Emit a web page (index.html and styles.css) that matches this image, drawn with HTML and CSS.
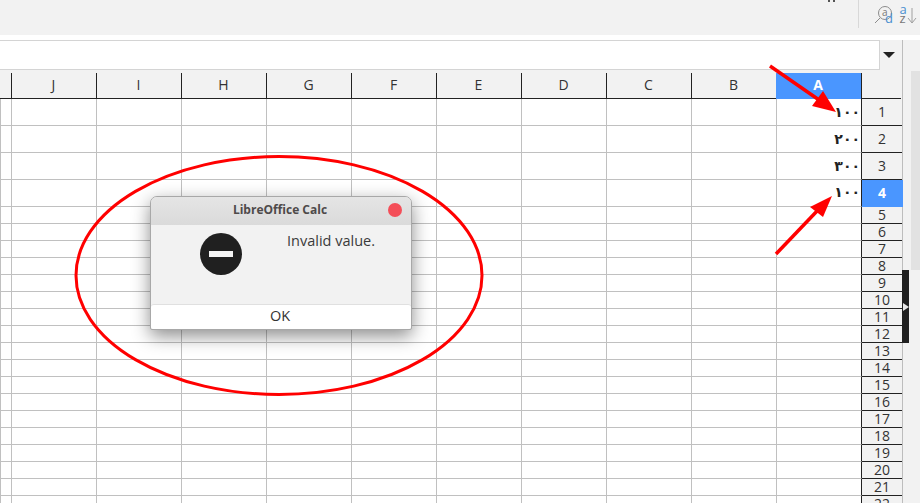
FILE: index.html
```html
<!DOCTYPE html>
<html lang="en">
<head>
<meta charset="utf-8">
<title>LibreOffice Calc</title>
<link rel="stylesheet" href="styles.css">
</head>
<body>
<div class="app">
  <div class="toolbar">
    <div class="clip-marks"><i></i><i></i></div>
    <div class="sep"></div>
    <svg class="tool-icon" width="20" height="28" viewBox="0 0 20 28">
      <circle cx="11" cy="13" r="6.5" fill="none" stroke="#8c8c8c"/>
      <path d="M6 18 L1 23" stroke="#8c8c8c" fill="none"/>
      <text class="icon-letter grey" x="8" y="16">a</text>
      <text class="icon-letter blue big" x="11" y="23">d</text>
    </svg>
    <svg class="tool-icon sort" width="18" height="28" viewBox="0 0 18 28">
      <text class="icon-letter blue big" x="0.5" y="14">a</text>
      <text class="icon-letter grey big" x="0.5" y="23">z</text>
      <path d="M13 8 V23 M9 18 L13 23 L17 18" fill="none" stroke="#a0a0a0"/>
    </svg>
  </div>
  <div class="formula-bar">
    <div class="formula-input"></div>
    <div class="formula-drop"></div>
  </div>
  <div class="sheet">
    <div class="pane">
      <div class="col-heads">
        <div class="corner"></div>
        <div class="col-head">J</div>
        <div class="col-head">I</div>
        <div class="col-head">H</div>
        <div class="col-head">G</div>
        <div class="col-head">F</div>
        <div class="col-head">E</div>
        <div class="col-head">D</div>
        <div class="col-head">C</div>
        <div class="col-head">B</div>
        <div class="col-head active">A</div>
        <div class="col-rest"></div>
      </div>
      <div class="row tall"><div class="cells"><span class="num">١٠٠</span></div><div class="row-head">1</div></div>
      <div class="row tall"><div class="cells"><span class="num">٢٠٠</span></div><div class="row-head">2</div></div>
      <div class="row tall"><div class="cells"><span class="num">٣٠٠</span></div><div class="row-head">3</div></div>
      <div class="row tall"><div class="cells"><span class="num last">١٠٠</span></div><div class="row-head active">4</div></div>
      <div class="row"><div class="cells"></div><div class="row-head">5</div></div>
      <div class="row"><div class="cells"></div><div class="row-head">6</div></div>
      <div class="row"><div class="cells"></div><div class="row-head">7</div></div>
      <div class="row"><div class="cells"></div><div class="row-head">8</div></div>
      <div class="row"><div class="cells"></div><div class="row-head">9</div></div>
      <div class="row"><div class="cells"></div><div class="row-head">10</div></div>
      <div class="row"><div class="cells"></div><div class="row-head">11</div></div>
      <div class="row"><div class="cells"></div><div class="row-head">12</div></div>
      <div class="row"><div class="cells"></div><div class="row-head">13</div></div>
      <div class="row"><div class="cells"></div><div class="row-head">14</div></div>
      <div class="row"><div class="cells"></div><div class="row-head">15</div></div>
      <div class="row"><div class="cells"></div><div class="row-head">16</div></div>
      <div class="row"><div class="cells"></div><div class="row-head">17</div></div>
      <div class="row"><div class="cells"></div><div class="row-head">18</div></div>
      <div class="row"><div class="cells"></div><div class="row-head">19</div></div>
      <div class="row"><div class="cells"></div><div class="row-head">20</div></div>
      <div class="row"><div class="cells"></div><div class="row-head">21</div></div>
      <div class="row"><div class="cells"></div><div class="row-head">22</div></div>
    </div>
    <div class="scroll">
      <div class="scroll-thumb"></div>
    </div>
    <div class="sidebar-handle"><svg width="6" height="8" viewBox="0 0 6 8"><path d="M0 0 L6 4 L0 8 Z" fill="#e8e8e8"/></svg></div>
  </div>
</div>

<div class="dialog">
  <div class="dialog-title">LibreOffice Calc<span class="dialog-close"></span></div>
  <div class="dialog-body">
    <svg class="stop-icon" width="42" height="42" viewBox="0 0 42 42">
      <circle cx="21" cy="21" r="21" fill="#202020"/>
      <rect x="9" y="18" width="24" height="6" fill="#f4f4f4"/>
    </svg>
    <div class="dialog-msg">Invalid value.</div>
  </div>
  <button class="dialog-ok">OK</button>
</div>

<svg class="marks" width="920" height="503" viewBox="0 0 920 503">
  <ellipse cx="279" cy="275.5" rx="203" ry="119" fill="none" stroke="#ff0000" stroke-width="3"/>
  <path d="M770 66 L822 102" stroke="#ff0000" stroke-width="3.5" fill="none"/>
  <path d="M836 112 L812 106 L823 91 Z" fill="#ff0000"/>
  <path d="M776 254 L818 210" stroke="#ff0000" stroke-width="3.5" fill="none"/>
  <path d="M832 196 L823 217 L810 207 Z" fill="#ff0000"/>
</svg>
</body>
</html>
```
FILE: styles.css
```css
* { box-sizing: border-box; }
html, body { margin: 0; padding: 0; width: 920px; height: 503px; overflow: hidden; background: #fff; }
body { font-family: "Open Sans", "Noto Sans", sans-serif; color: #333; position: relative; }

.app { display: flex; flex-direction: column; height: 503px; overflow: hidden; }

.toolbar { height: 35px; background: #f2f2f2; display: flex; align-items: flex-start; justify-content: flex-end; margin-bottom: 5px; padding-right: 3px; flex: none; }
.clip-marks { display: flex; gap: 3px; margin-right: 23px; }
.clip-marks i { display: block; width: 2px; height: 2px; background: #555; }
.sep { width: 1px; height: 28px; background: #d8d8d8; margin-right: 15px; }
.tool-icon { display: block; margin-right: 5px; }
.tool-icon.sort { margin-right: 0; }
.icon-letter { font-family: "Open Sans", sans-serif; font-size: 10px; }
.icon-letter.big { font-size: 13px; }
.icon-letter.grey { fill: #777; }
.icon-letter.blue { fill: #4a8fd0; }

.formula-bar { height: 33px; display: flex; background: #f2f2f2; flex: none; }
.formula-input { width: 880px; height: 30px; background: #fff; border: 1px solid #d4d4d4; border-left: 0; }
.formula-drop { height: 0; width: 0; margin: 12px 0 0 3px; border-left: 6px solid transparent; border-right: 6px solid transparent; border-top: 6px solid #222; box-sizing: content-box; }

.sheet { flex: 1; display: flex; position: relative; min-height: 0; background: #f2f2f2; }
.pane { width: 902px; flex: none; }
.scroll { flex: 1; border-left: 1px solid #bdbdbd; background: #f2f2f2; position: relative; margin-top: -33px; }
.scroll-thumb { position: absolute; right: 0; top: 31px; width: 9px; height: 199px; background: #e2e2e2; }
.sidebar-handle { position: absolute; left: 902px; top: 197px; width: 7px; height: 73px; background: #202020; display: flex; align-items: center; padding-left: 1px; }

.col-heads { display: flex; height: 26px; background: #f2f2f2; }
.corner { width: 12px; border-right: 1px solid #222; border-bottom: 1px solid #222; flex: none; }
.col-head { width: 85px; flex: none; border-right: 1px solid #222; border-bottom: 1px solid #222; text-align: center; font-size: 14px; line-height: 24px; padding-right: 1px; }
.col-head.active { width: 86px; margin-left: -1px; background: #4a96ff; color: #fff; font-weight: 700; border-bottom: 0; }
.col-rest { flex: 1; border-bottom: 1px solid #222; margin-right: 1px; }

.row { display: flex; height: 17px; }
.row.tall { height: 27px; }
.cells { width: 862px; flex: none; background-color: #fff; border-bottom: 1px solid #c0c0c0; border-right: 1px solid #222; text-align: right; padding-right: 1px;
  background-image: repeating-linear-gradient(to right, #c0c0c0 0, #c0c0c0 1px, transparent 1px, transparent 85px);
  background-position: 11px 0; }
.num { font-family: "DejaVu Sans", sans-serif; font-weight: 700; font-size: 14px; line-height: 26px; color: #222; display: block; }
.num.last { line-height: 25px; }
.row-head { width: 40px; flex: none; background: #f2f2f2; border-bottom: 1px solid #222; text-align: center; font-size: 14px; line-height: 16px; }
.row.tall .row-head { line-height: 25px; }
.row-head.active { position: relative; z-index: 1; background: #4a96ff; color: #fff; font-weight: 700; width: 41px; border-bottom: 0; padding-right: 1px; }

.dialog { position: absolute; left: 150px; top: 196px; width: 262px; height: 134px; background: #f2f2f2; border: 1px solid #a8a8a8; border-radius: 7px 7px 2px 2px; box-shadow: 0 6px 18px rgba(0,0,0,.45); display: flex; flex-direction: column; overflow: hidden; }
.dialog-title { height: 28px; padding-right: 2px; background: linear-gradient(#e5e5e5, #dadada); font-size: 12px; font-weight: 700; color: #4e4a4a; text-align: center; line-height: 26px; position: relative; flex: none; }
.dialog-close { position: absolute; right: 9px; top: 6px; width: 14px; height: 14px; border-radius: 50%; background: #f44e58; }
.dialog-body { flex: 1; display: flex; position: relative; }
.stop-icon { display: block; margin: 8px 0 0 49px; flex: none; }
.dialog-msg { margin: 6px 0 0 45px; font-size: 14.5px; line-height: 20px; color: #3a3a3a; }
.dialog-ok { height: 25px; border: 0; border-top: 1px solid #e0e0e0; background: #fff; border-radius: 3px; font: 14.5px "Open Sans", sans-serif; color: #333; padding: 0 2px 4px 0; flex: none; }

.marks { position: absolute; left: 0; top: 0; pointer-events: none; }
```
